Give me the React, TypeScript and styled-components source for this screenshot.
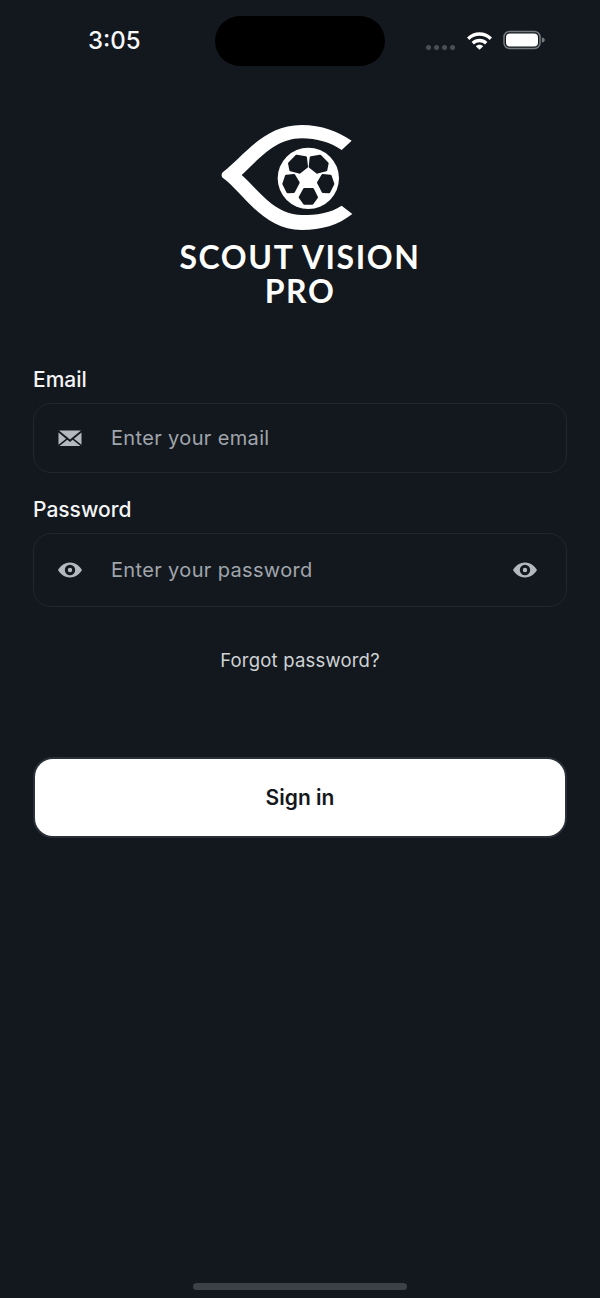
import React from "react";
import styled, { createGlobalStyle } from "styled-components";

const Global = createGlobalStyle`
  html, body { margin: 0; padding: 0; background: #13181e; }
  * { box-sizing: border-box; }
`;

const Screen = styled.div`
  width: 600px;
  height: 1298px;
  background: #13181e;
  display: flex;
  flex-direction: column;
  font-family: Inter, "Liberation Sans", sans-serif;
  color: #fff;
  overflow: hidden;
  position: relative;
`;

const StatusBar = styled.div`
  display: grid;
  grid-template-columns: 215px 170px 215px;
  height: 50px;
  margin-top: 16px;
`;

const Time = styled.div`
  padding-left: 88px;
  font-size: 24px;
  font-weight: 500;
  line-height: 50px;
  color: #f6f7f8;
`;

const Island = styled.div`
  background: #000;
  border-radius: 25px;
`;

const StatusIcons = styled.div`
  display: flex;
  align-items: center;
  padding-left: 41px;
  margin-top: -2px;
`;

const Dots = styled.div`
  display: flex;
  gap: 3px;
  margin-top: 14px;
  margin-right: 11px;
`;

const Dot = styled.span`
  width: 5px;
  height: 5px;
  border-radius: 50%;
  background: #4a4f55;
`;

const Wifi = styled.svg`
  width: 27px;
  height: 20px;
  margin-right: 10px;
`;

const Battery = styled.svg`
  width: 43px;
  height: 20px;
`;

const Brand = styled.div`
  display: flex;
  flex-direction: column;
  align-items: center;
  margin-top: 58px;
`;

const Logo = styled.svg`
  width: 158px;
  height: 108px;
  display: block;
`;

const BrandName = styled.div`
  margin-top: 8px;
  width: 300px;
  text-align: center;
  font-family: Lato, "Open Sans", sans-serif;
  font-size: 32px;
  line-height: 34px;
  font-weight: 700;
  letter-spacing: 1.6px;
  color: #fff;
`;

const Form = styled.div`
  display: flex;
  flex-direction: column;
  padding: 0 33px;
  margin-top: 60px;
`;

const Label = styled.div`
  font-size: 21px;
  line-height: 24px;
  font-weight: 500;
  color: #f4f5f6;
  margin-bottom: 11px;
`;

const Field = styled.div<{ $h: number; $mb: number }>`
  height: ${(p) => p.$h}px;
  margin-bottom: ${(p) => p.$mb}px;
  border: 1.5px solid #21272d;
  border-radius: 18px;
  display: flex;
  align-items: center;
  padding: 0 28px 0 23px;
`;

const FieldIcon = styled.svg`
  width: 26px;
  height: 26px;
  flex: none;
  color: #b4b9bf;
`;

const Placeholder = styled.div`
  margin-left: 28px;
  flex: 1;
  font-size: 20px;
  letter-spacing: 0.35px;
  color: #a0a5ac;
`;

const Forgot = styled.div`
  text-align: center;
  font-size: 18.5px;
  line-height: 22px;
  letter-spacing: 0.2px;
  color: #cfd2d5;
  margin-top: 42px;
`;

const SignIn = styled.button`
  margin-top: 86px;
  height: 81px;
  border: 2px solid #2a303a;
  border-radius: 20px;
  background: #fff;
  color: #14181d;
  font-family: inherit;
  font-size: 21px;
  font-weight: 600;
`;

const HomeBar = styled.div`
  position: absolute;
  left: 193px;
  top: 1283px;
  width: 214px;
  height: 7px;
  border-radius: 4px;
  background: #3c4146;
`;

const MailIcon = () => (
  <FieldIcon viewBox="0 0 26 26">
    <path d="M2 5.500h22L13 14.500z" fill="currentColor" />
    <path d="M1.500 7.500v12.200l7.600-6zM24.500 7.500v12.200l-7.600-6z" fill="currentColor" />
    <path d="M2.500 21h21l-7.800-6.200L13 17l-2.700-2.200z" fill="currentColor" />
  </FieldIcon>
);

const EyeIcon = () => (
  <FieldIcon viewBox="0 0 26 26">
    <path
      fillRule="evenodd"
      d="M13 5.500c6 0 10.200 4.200 12 7.500-1.800 3.300-6 7.500-12 7.500S2.800 16.300 1 13c1.800-3.300 6-7.500 12-7.500zM13 7.800a5.200 5.200 0 1 0 0 10.400 5.200 5.200 0 0 0 0-10.400z"
      fill="currentColor"
    />
    <circle cx="13" cy="13" r="2.200" fill="currentColor" />
  </FieldIcon>
);

export default function App() {
  return (
    <Screen>
      <Global />
      <StatusBar>
        <Time>3:05</Time>
        <Island />
        <StatusIcons>
          <Dots>
            <Dot />
            <Dot />
            <Dot />
            <Dot />
          </Dots>
          <Wifi viewBox="0 0 27 20">
            <path d="M1 7.500C8 .5 19 .5 26 7.500l-2.300 2.400C17.800 4.300 9.200 4.300 3.300 9.900z" fill="#fff" />
            <path d="M5.600 12C10 7.600 17 7.600 21.400 12l-2.400 2.400c-3-3-8-3-11 0z" fill="#fff" />
            <path d="M9.800 16.200c2-2 5.400-2 7.400 0l-3.700 3.600z" fill="#fff" />
          </Wifi>
          <Battery viewBox="0 0 43 20">
            <rect x="1" y="1.500" width="36" height="17" rx="5.500" fill="none" stroke="#777b80" strokeWidth="1.500" />
            <rect x="3" y="3.500" width="32" height="13" rx="4" fill="#fff" />
            <path d="M38.800 7.500c2 .3 3 1.300 3 2.500s-1 2.200-3 2.500z" fill="#777b80" />
          </Battery>
        </StatusIcons>
      </StatusBar>

      <Brand>
        <Logo viewBox="63 42 474 324">
          <path
            d="M70 185 C 130 140 190 45 305 45 C 365 45 415 65 455 92 L 425 120 C 390 97 350 85 305 85 C 225 85 175 150 125 195 C 175 240 225 315 305 315 C 350 315 390 310 425 287 L 457 312 C 415 345 365 360 305 360 C 190 360 130 250 70 205 C 63 200 63 190 70 185 Z"
            fill="#fff"
          />
          <circle cx="325" cy="205" r="92" fill="#fff" />
          <g fill="#13181e" stroke="#13181e" strokeWidth="8" strokeLinejoin="round">
            <polygon points="290,138 317,143 320,170 298,187 272,180 268,160" />
            <polygon points="360,138 333,143 330,170 352,187 378,180 382,160" />
            <polygon points="259,198 282,196 295,218 281,245 263,246 251,222" />
            <polygon points="391,198 368,196 355,218 369,245 387,246 399,222" />
            <polygon points="313,238 338,238 350,262 337,280 313,280 300,262" />
          </g>
        </Logo>
        <BrandName>SCOUT VISION PRO</BrandName>
      </Brand>

      <Form>
        <Label>Email</Label>
        <Field $h={70} $mb={25}>
          <MailIcon />
          <Placeholder>Enter your email</Placeholder>
        </Field>
        <Label>Password</Label>
        <Field $h={74} $mb={0}>
          <EyeIcon />
          <Placeholder>Enter your password</Placeholder>
          <EyeIcon />
        </Field>
        <Forgot>Forgot password?</Forgot>
        <SignIn>Sign in</SignIn>
      </Form>
      <HomeBar />
    </Screen>
  );
}
